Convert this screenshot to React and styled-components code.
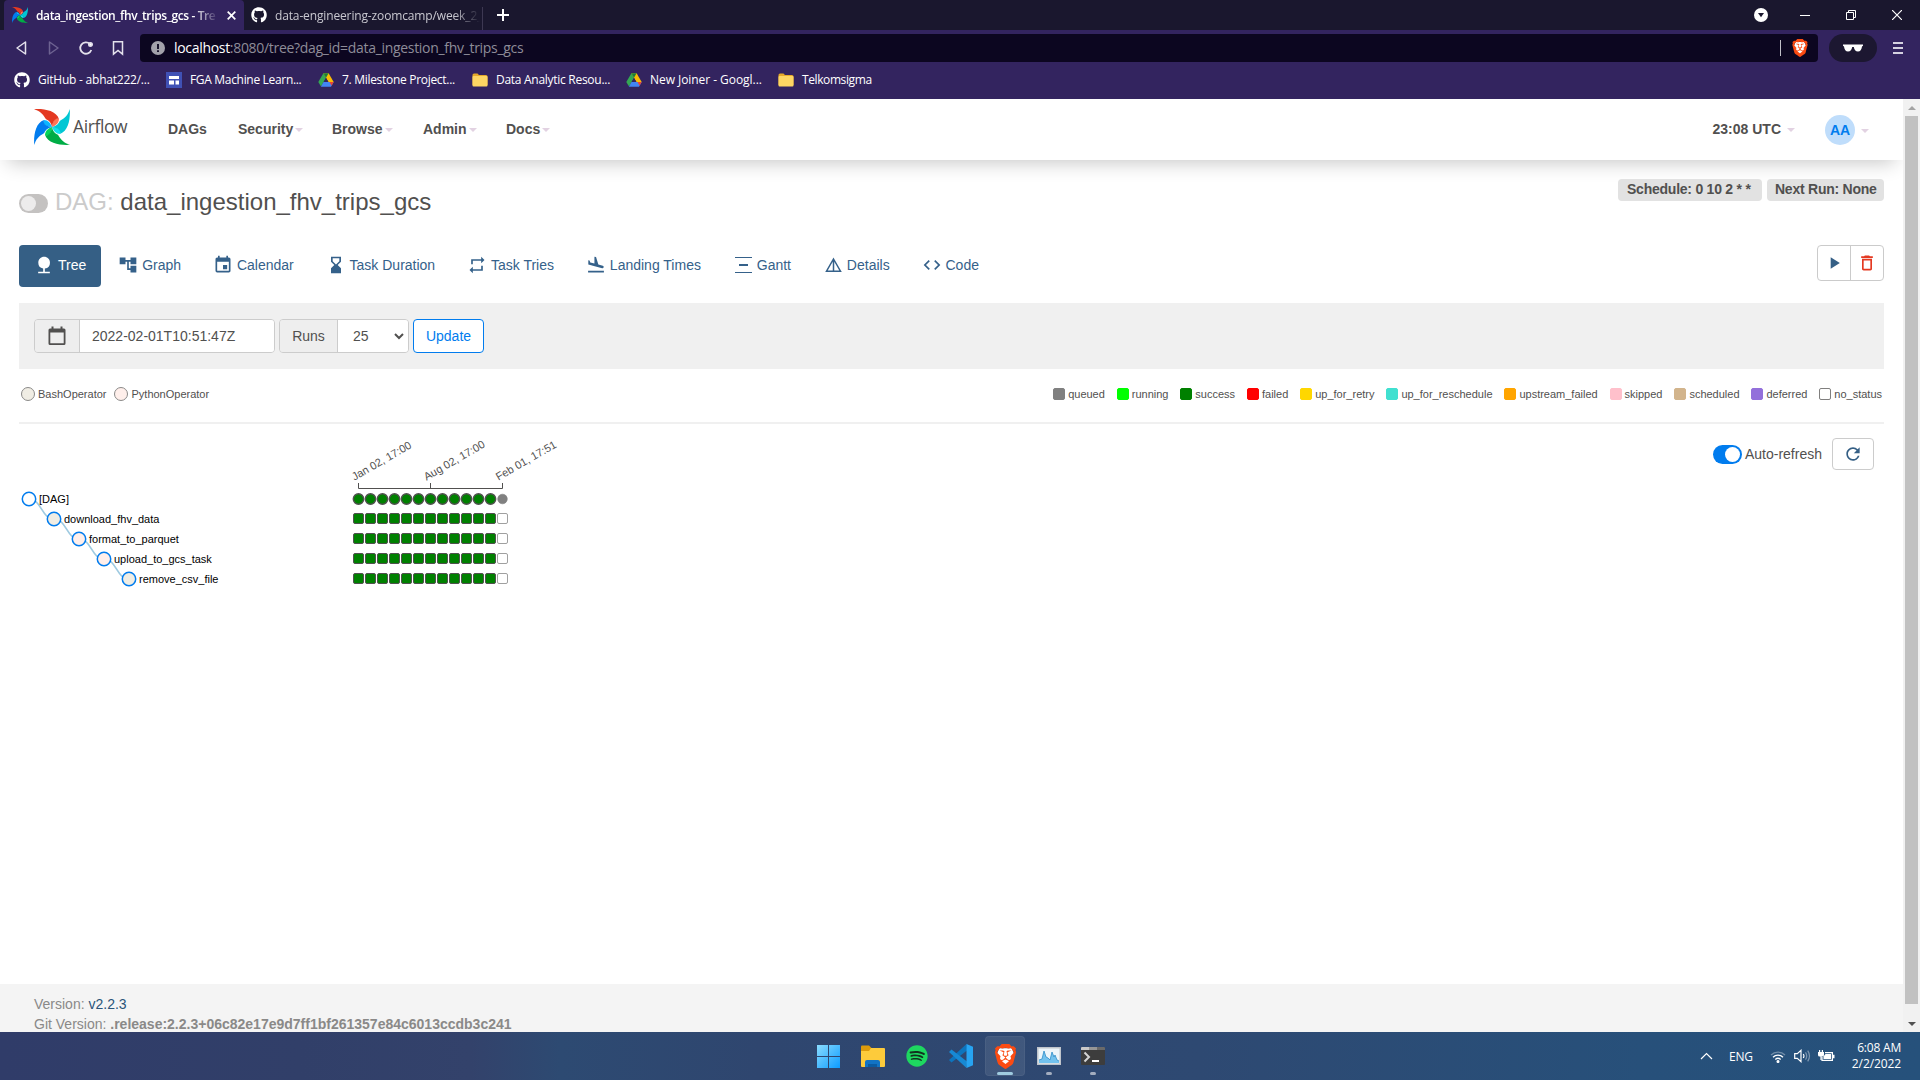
import React from "react";
import styled, { createGlobalStyle } from "styled-components";
import {
  MdNature,
  MdAccountTree,
  MdEvent,
  MdHourglassBottom,
  MdRepeat,
  MdFlightLand,
  MdCode,
  MdPlayArrow,
  MdDeleteOutline,
  MdRefresh,
} from "react-icons/md";
import { FaGithub, FaSpotify } from "react-icons/fa";
import { SiBrave } from "react-icons/si";

const ui = `"Open Sans", "Noto Sans", sans-serif`;
const arial = `"Liberation Sans", Arial, sans-serif`;

const Global = createGlobalStyle`
  *, *::before, *::after { box-sizing: border-box; }
  html, body { margin: 0; padding: 0; }
  body { width: 1920px; height: 1080px; overflow: hidden; background: #fff; }
  svg { display: block; flex: none; }
`;

const Screen = styled.div`
  display: flex;
  flex-direction: column;
  width: 1920px;
  height: 1080px;
`;

const Label = styled.span`
  white-space: pre;
  letter-spacing: ${(p) => p.$ls || 0}px;
`;

/* ---------- browser ---------- */

const TabStrip = styled.div`
  display: flex;
  height: 30px;
  padding-left: 4px;
  background: #1a172e;
  font-family: ${ui};
  color: #fff;
`;

const Tab = styled.div`
  display: flex;
  align-items: center;
  width: ${(p) => p.$w}px;
  padding-left: ${(p) => p.$pl}px;
  gap: 8px;
  border-radius: 4px 4px 0 0;
  font-size: 12px;
  font-weight: ${(p) => (p.$active ? 600 : 400)};
  color: ${(p) => (p.$active ? "#fff" : "#c9c8d0")};
  background: ${(p) => (p.$active ? "#33245f" : "transparent")};
`;

const TabTitle = styled.div`
  width: ${(p) => p.$w}px;
  white-space: nowrap;
  letter-spacing: ${(p) => p.$ls}px;
  mask-image: linear-gradient(to right, #000 ${(p) => p.$w - 26}px, transparent);
`;

const TabRule = styled.div`
  width: 1px;
  height: 23px;
  margin-top: 7px;
  background: #3d3852;
`;

const NewTab = styled.div`
  display: flex;
  align-items: center;
  padding-left: 14px;
`;

const WindowControls = styled.div`
  display: flex;
  align-items: center;
  margin-left: auto;
  padding-bottom: 1px;
  padding-right: 18px;
`;

const ControlSlot = styled.div`
  display: flex;
  justify-content: flex-end;
  width: ${(p) => p.$w}px;
`;

const Toolbar = styled.div`
  display: flex;
  align-items: center;
  height: 36px;
  padding: 0 16px 0 14px;
  background: #33245f;
`;

const NavButtons = styled.div`
  display: flex;
  align-items: center;
  width: 126px;
  gap: 16px;
`;

const UrlBar = styled.div`
  display: flex;
  align-items: center;
  width: 1678px;
  height: 28px;
  padding: 0 9px 0 11px;
  border-radius: 4px;
  background: #0c0620;
  color: #8e8c98;
  font: 14px ${ui};
`;

const UrlText = styled.div`
  margin-left: 9px;
  padding-bottom: 1px;
  letter-spacing: -0.31px;
  b { font-weight: 400; color: #fff; }
`;

const UrlRule = styled.div`
  width: 1px;
  height: 16px;
  margin-left: auto;
  margin-right: 10px;
  background: #c0bfc8;
`;

const PrivatePill = styled.div`
  display: flex;
  align-items: center;
  justify-content: center;
  width: 48px;
  height: 28px;
  margin-left: 11px;
  border-radius: 14px;
  background: #1c1731;
`;

const MenuLines = styled.div`
  display: flex;
  flex-direction: column;
  gap: 3px;
  width: 10px;
  margin-left: 16px;
  i { height: 2px; background: #d5d1e0; }
`;

const Bookmarks = styled.div`
  display: flex;
  align-items: center;
  height: 33px;
  padding: 0 0 6px 13px;
  background: #33245f;
  color: #fff;
  font: 12px ${ui};
`;

const Bookmark = styled.div`
  display: flex;
  align-items: center;
  width: ${(p) => p.$w}px;
  gap: 8px;
`;

const IconBox = styled.span`
  display: flex;
  align-items: center;
  justify-content: center;
  width: ${(p) => p.$w || 16}px;
  flex: none;
`;

/* ---------- page ---------- */

const Viewport = styled.div`
  display: flex;
  height: 933px;
  overflow: hidden;
  background: #fff;
`;

const Page = styled.div`
  display: flex;
  flex-direction: column;
  width: 1903px;
  overflow: hidden;
  font: 14px/20px ${arial};
  color: #51504f;
`;

const Scrollbar = styled.div`
  display: flex;
  flex-direction: column;
  align-items: center;
  width: 17px;
  background: #f1f1f1;
`;

const ScrollArrow = styled.div`
  display: flex;
  align-items: center;
  justify-content: center;
  height: 17px;
  svg { fill: ${(p) => p.$c}; }
`;

const ScrollThumb = styled.div`
  width: 13px;
  height: 888px;
  margin-bottom: 11px;
  background: #c1c1c1;
`;

const Navbar = styled.nav`
  display: flex;
  align-items: center;
  height: 61px;
  flex: none;
  padding: 0 34px;
  background: #fff;
  box-shadow: 0 10px 20px -8px rgba(0, 0, 0, 0.24);
  font-weight: 700;
`;

const Brand = styled.div`
  display: flex;
  align-items: center;
  width: 134px;
  gap: 3px;
  padding-bottom: 5px;
  font: 400 17.5px/20px ${ui};
  span { padding-bottom: 2px; letter-spacing: -0.4px; }
`;

const NavLink = styled.div`
  display: flex;
  align-items: center;
  width: ${(p) => p.$w}px;
  padding-bottom: ${(p) => (p.$flush ? 0 : 2)}px;
  gap: ${(p) => p.$gap || 2}px;
`;

const Caret = styled.i`
  border: 4px solid transparent;
  border-top-color: #e2d2e2;
  border-bottom: 0;
  margin-top: 2px;
`;

const NavRight = styled.div`
  display: flex;
  align-items: center;
  margin-left: auto;
  gap: 30px;
`;

const Avatar = styled.div`
  width: 30px;
  height: 30px;
  border-radius: 50%;
  background: #bfddfb;
  color: #017cee;
  text-align: center;
  line-height: 31px;
`;

const Content = styled.main`
  height: 824px;
  padding: 19px 19px 0;
`;

const TitleRow = styled.div`
  display: flex;
  justify-content: space-between;
  height: 66px;
`;

const Title = styled.h3`
  display: flex;
  align-items: center;
  height: 28px;
  margin: 9px 0 0;
  gap: 7px;
  font-size: 24px;
  font-weight: 400;
  white-space: pre;
  span { color: #cbcbcb; }
`;

const Switch = styled.div`
  display: flex;
  align-items: center;
  justify-content: ${(p) => (p.$on ? "flex-end" : "flex-start")};
  width: 29px;
  height: 19px;
  padding: 2px;
  border-radius: 10px;
  margin-top: ${(p) => p.$mt || 0}px;
  background: ${(p) => (p.$on ? "#017cee" : "#c4c2c1")};
  i {
    width: 15px;
    height: 15px;
    border-radius: 50%;
    background: ${(p) => (p.$on ? "#fff" : "#edecec")};
  }
`;

const Badges = styled.div`
  display: flex;
  gap: 5px;
`;

const Badge = styled.div`
  height: 22px;
  width: ${(p) => p.$w}px;
  padding: 0 0 0 ${(p) => p.$pl}px;
  border-radius: 4px;
  background: #e2e2e2;
  font-weight: 700;
  line-height: 21px;
  letter-spacing: -0.24px;
  white-space: pre;
`;

const PillRow = styled.div`
  display: flex;
  justify-content: space-between;
  height: 58px;
`;

const Pills = styled.div`
  display: flex;
  gap: 1.85px;
  height: 42px;
`;

const Pill = styled.div`
  display: flex;
  align-items: center;
  gap: 4px;
  padding: 0 15px 2px;
  border-radius: 4px;
  color: ${(p) => (p.$active ? "#fff" : "#35618a")};
  background: ${(p) => (p.$active ? "#355f85" : "transparent")};
`;

const ButtonGroup = styled.div`
  display: flex;
  width: 67px;
  height: 36px;
  border: 1px solid #cbcbcb;
  border-radius: 4px;
`;

const GroupButton = styled.div`
  display: flex;
  align-items: center;
  justify-content: center;
  width: ${(p) => p.$w}px;
  color: ${(p) => p.$c};
  & + & { border-left: 1px solid #cbcbcb; }
`;

const FilterBar = styled.div`
  display: flex;
  gap: 4px;
  height: 66px;
  padding: 16px 15px;
  background: #f0f0f0;
`;

const InputGroup = styled.div`
  display: flex;
  width: ${(p) => p.$w}px;
  height: 34px;
  border: 1px solid #ccc;
  border-radius: 4px;
  overflow: hidden;
`;

const Addon = styled.div`
  display: flex;
  align-items: center;
  justify-content: center;
  width: ${(p) => p.$w}px;
  border-right: 1px solid #ccc;
  background: #eee;
`;

const Field = styled.div`
  display: flex;
  align-items: center;
  justify-content: space-between;
  flex: 1;
  padding: 0 4px 0 ${(p) => p.$pl}px;
  background: #fff;
`;

const UpdateButton = styled.div`
  width: 71px;
  height: 34px;
  border: 1px solid #017cee;
  border-radius: 4px;
  background: #fff;
  color: #017cee;
  text-align: center;
  line-height: 32px;
`;

const Legend = styled.div`
  display: flex;
  justify-content: space-between;
  align-items: center;
  height: 55px;
  padding: 0 2px 3px;
  border-bottom: 2px solid #f0f0f0;
  font-size: 11px;
`;

const LegendGroup = styled.div`
  display: flex;
  gap: ${(p) => p.$gap}px;
`;

const LegendItem = styled.div`
  display: flex;
  align-items: center;
  gap: 3px;
  height: 16px;
  letter-spacing: ${(p) => p.$ls || 0}px;
`;

const OperatorDot = styled.i`
  width: 14px;
  height: 14px;
  border: 1px solid #8a8988;
  border-radius: 50%;
  background: ${(p) => p.$c};
`;

const StateSwatch = styled.i`
  width: 12px;
  height: 12px;
  border: 1px solid ${(p) => (p.$c === "white" ? "#807f7e" : p.$c)};
  border-radius: 2px;
  background: ${(p) => p.$c};
`;

const TreeArea = styled.div`
  display: flex;
  justify-content: space-between;
  padding: 14px 10px 0 0;
`;

const Refresh = styled.div`
  display: flex;
  align-items: center;
  gap: 3px;
  height: 32px;
`;

const RefreshButton = styled.div`
  display: flex;
  align-items: center;
  justify-content: center;
  width: 42px;
  height: 32px;
  margin-left: 7px;
  border: 1px solid #ccc;
  border-radius: 4px;
  color: #355f85;
`;

const TreeChart = styled.svg`
  margin-left: -19px;
  font-family: ${arial};
  font-size: 11px;
`;

const Footer = styled.footer`
  height: 48px;
  padding: 10px 34px 0;
  background: #f4f4f4;
  color: #8a8988;
  a { color: #2a5479; }
`;

/* ---------- taskbar ---------- */

const Taskbar = styled.div`
  display: flex;
  align-items: center;
  height: 48px;
  background: linear-gradient(90deg, #303c69 0, #313f69 300px, #33426b 470px, #2d4a72 560px, #2f466f 760px, #2e4972 1200px, #27507a 1640px, #26517b 1920px);
  color: #fff;
  font: 12px ${ui};
`;

const TaskIcons = styled.div`
  display: flex;
  gap: 4px;
  width: 908px;
  margin-left: 809px;
`;

const TaskIcon = styled.div`
  display: flex;
  flex-direction: column;
  align-items: center;
  justify-content: flex-end;
  width: 40px;
  height: 40px;
  border-radius: 4px;
  background: ${(p) => (p.$active ? "rgba(255,255,255,0.09)" : "transparent")};
  box-shadow: ${(p) => (p.$active ? "inset 0 0 0 1px rgba(255,255,255,0.05)" : "none")};
`;

const Glyph = styled.div`
  display: flex;
  align-items: center;
  justify-content: center;
  height: 24px;
  margin-bottom: 4px;
`;

const Running = styled.i`
  width: ${(p) => p.$w || 0}px;
  height: 3px;
  margin-bottom: 1px;
  border-radius: 2px;
  background: ${(p) => (p.$w > 6 ? "#9fcbe0" : "#a3adbf")};
`;

const Tray = styled.div`
  display: flex;
  align-items: center;
  margin-left: -17px;
`;

const TraySlot = styled.div`
  width: ${(p) => p.$w}px;
  padding-bottom: ${(p) => p.$pb || 0}px;
`;

const Clock = styled.div`
  width: 65px;
  text-align: right;
  line-height: 16px;
`;

/* ---------- drawings ---------- */

const blades = [
  ["#e43921", "#ff7557"],
  ["#00c7d4", "#11e1ee"],
  ["#00ad46", "#04d659"],
  ["#017cee", "#0cb6ff"],
];

const Pinwheel = ({ size }) => (
  <svg width={size} height={size} viewBox="0 0 36 36">
    {blades.map(([dark, light], i) => (
      <g key={dark} transform={`rotate(${i * 90} 18 18)`}>
        <path fill={light} d="M25 10 C24.800 14 22 16.500 18 18 C18.500 11 21.500 8 25 10 Z" />
        <path fill={dark} d="M0 .2 C10 -.4 22 1.500 25 10 C22 9 19 11 18 18 C17 12.500 13.500 11 12 10.300 C9 5 6 2 0 .2 Z" />
      </g>
    ))}
  </svg>
);

const DriveIcon = () => (
  <svg width="16" height="14" viewBox="0 0 16 14">
    <path fill="#34a853" d="M5.400 0.300 L8 4.700 L3 13.500 L.3 9 Z" />
    <path fill="#fbbc04" d="M5.400 .3 H10.600 L15.700 9 H10.500 Z" />
    <path fill="#4285f4" d="M5.500 9 H15.700 L13 13.700 H2.900 Z" />
    <path fill="#ea4335" d="M11.500 9 H15.700 L13.500 12.800 Z" />
    <path fill="#188038" d="M5.400 .3 H10.600 L8 4.700 Z" />
    <path fill="#33245f" d="M8 5 L10.300 9 H5.700 Z" />
  </svg>
);

const FolderIcon = () => (
  <svg width="16" height="14" viewBox="0 0 16 14">
    <path fill="#e5a92a" d="M.5 2 Q.5 .5 2 .5 H5.500 L7 2 H14 Q15.500 2 15.500 3.500 V12 H.5 Z" />
    <rect x=".5" y="3" width="15" height="10.500" rx="1" fill="#fdd663" />
  </svg>
);

const SitesIcon = () => (
  <svg width="16" height="16" viewBox="0 0 16 16">
    <rect width="16" height="16" fill="#4051b5" />
    <rect x="3" y="4" width="10" height="3" fill="#fff" />
    <rect x="3" y="8.500" width="5" height="4" fill="#fff" />
    <rect x="9.500" y="8.500" width="3.500" height="4" fill="#fff" />
  </svg>
);

const BraveLogo = ({ size }) => (
  <svg width={size} height={size} viewBox="0 0 24 24">
    <path fill="#fff" d="M6 4 H18 L20 9 L17 18 L12 22 L7 18 L4 9 Z" />
    <SiBrave size={24} color="#fb4b12" />
  </svg>
);

const GanttIcon = () => (
  <svg width="20" height="18" viewBox="0 0 20 18" fill="currentColor">
    <path d="M2 1h17v1H2zM6 8h9v2H6zM2 16h17v1H2z" />
  </svg>
);

const DetailsIcon = () => (
  <svg width="20" height="18" viewBox="0 0 20 18" fill="none" stroke="currentColor" strokeWidth="1.500">
    <path d="M10.500 3 L17.500 15.200 H3.500 Z M10.500 3 V15" />
  </svg>
);

const CalendarOutline = () => (
  <svg width="18" height="20" viewBox="0 0 18 20">
    <path fill="#51504f" fillRule="evenodd" d="M3.500 .5h2v2h7v-2h2v2H16q1.500 0 1.500 1.500v13.500Q17.500 19 16 19H2Q.5 19 .5 17.500V4Q.5 2.500 2 2.500h1.500zM2.300 6.500v10.700h13.400V6.500z" />
  </svg>
);

/* ---------- data ---------- */

const pills = [
  ["Tree", <MdNature size={20} />],
  ["Graph", <MdAccountTree size={20} />],
  ["Calendar", <MdEvent size={20} />],
  ["Task Duration", <MdHourglassBottom size={20} />],
  ["Task Tries", <MdRepeat size={20} />],
  ["Landing Times", <MdFlightLand size={20} />],
  ["Gantt", <GanttIcon />],
  ["Details", <DetailsIcon />],
  ["Code", <MdCode size={20} />],
];

const states = [
  ["queued", "gray"],
  ["running", "lime"],
  ["success", "green"],
  ["failed", "red"],
  ["up_for_retry", "gold"],
  ["up_for_reschedule", "turquoise"],
  ["upstream_failed", "orange"],
  ["skipped", "pink"],
  ["scheduled", "tan"],
  ["deferred", "mediumpurple"],
  ["no_status", "white"],
];

const tasks = [
  ["[DAG]", "#fff"],
  ["download_fhv_data", "#f0ede4"],
  ["format_to_parquet", "#ffefeb"],
  ["upload_to_gcs_task", "#ffefeb"],
  ["remove_csv_file", "#f0ede4"],
];

const ticks = [
  [358.5, "Jan 02, 17:00"],
  [430.5, "Aug 02, 17:00"],
  [502.5, "Feb 01, 17:51"],
];

const runs = Array.from({ length: 13 }, (_, i) => i);

const Chart = () => (
  <TreeChart width="620" height="160" viewBox="0 438 620 160">
    {tasks.slice(1).map(([name], i) => {
      const x = 29 + i * 25;
      const y = 499 + i * 20;
      return (
        <path
          key={name}
          d={`M${x} ${y} C${x + 12.5} ${y} ${x + 12.5} ${y + 20} ${x + 25} ${y + 20}`}
          fill="none"
          stroke="#9ecae1"
          strokeWidth="1.500"
        />
      );
    })}
    {tasks.map(([name, fill], i) => (
      <g key={name}>
        <circle cx={29 + i * 25} cy={499 + i * 20} r="6.700" fill={fill} stroke="#017cee" strokeWidth="1.500" />
        <text x={39 + i * 25} y={503 + i * 20} fill="#000">{name}</text>
      </g>
    ))}
    <path d="M358.500 483 V488.500 H502.500 V483 M430.500 483 V488" fill="none" stroke="#51504f" />
    {ticks.map(([x, text]) => (
      <text key={text} transform={`translate(${x - 4} 480.800) rotate(-30)`} fill="#51504f">{text}</text>
    ))}
    {runs.map((i) => {
      const done = i < 12;
      const x = 358.5 + i * 12;
      return (
        <g key={i} stroke={done ? "#51504f" : "#a0a0a0"}>
          <circle cx={x} cy="499" r={done ? 5.2 : 4.8} fill={done ? "green" : "gray"} stroke={done ? "#51504f" : "gray"} strokeWidth={done ? 1.4 : 0.6} />
          {[0, 1, 2, 3].map((r) => (
            <rect key={r} x={x - 5} y={513.5 + r * 20} width="10" height="10" rx="1.500" fill={done ? "green" : "#fff"} />
          ))}
        </g>
      );
    })}
  </TreeChart>
);

export default function App() {
  return (
    <Screen>
      <Global />
      <TabStrip>
        <Tab $active $w={240} $pl={8}>
          <Pinwheel size={16} />
          <TabTitle $w={183} $ls={-0.38}>data_ingestion_fhv_trips_gcs - Tre</TabTitle>
          <svg width="9" height="9" viewBox="0 0 9 9" stroke="#fff" strokeWidth="1.700">
            <path d="M.7 .7 L8.300 8.300 M8.300 .7 L.7 8.300" />
          </svg>
        </Tab>
        <Tab $w={238} $pl={7}>
          <FaGithub size={16} color="#fff" />
          <TabTitle $w={205} $ls={-0.14}>data-engineering-zoomcamp/week_2_</TabTitle>
        </Tab>
        <TabRule />
        <NewTab>
          <svg width="12" height="12" viewBox="0 0 12 12" fill="#fff"><path d="M5 0h2v5h5v2H7v5H5V7H0V5h5z" /></svg>
        </NewTab>
        <WindowControls>
          <ControlSlot $w={20}>
            <svg width="14" height="14" viewBox="0 0 14 14"><circle cx="7" cy="7" r="7" fill="#fff" /><path d="M4 5h6L7 9.300z" fill="#1a172e" /></svg>
          </ControlSlot>
          <ControlSlot $w={42}>
            <svg width="10" height="10" viewBox="0 0 10 10"><path d="M0 5.500h10" stroke="#fff" /></svg>
          </ControlSlot>
          <ControlSlot $w={46}>
            <svg width="10" height="10" viewBox="0 0 10 10" fill="none" stroke="#fff"><path d="M.5 2.500h7v7h-7zM2.500 2V.5h7v7H8" /></svg>
          </ControlSlot>
          <ControlSlot $w={46}>
            <svg width="10" height="10" viewBox="0 0 10 10" stroke="#fff" strokeWidth="1.200"><path d="M0 0L10 10M10 0L0 10" /></svg>
          </ControlSlot>
        </WindowControls>
      </TabStrip>

      <Toolbar>
        <NavButtons>
          <svg width="16" height="16" viewBox="0 0 16 16" fill="none" stroke="#e4e1ec" strokeWidth="1.500" strokeLinejoin="round"><path d="M11.500 2v12L3 8z" /></svg>
          <svg width="16" height="16" viewBox="0 0 16 16" fill="none" stroke="#6d6291" strokeWidth="1.500" strokeLinejoin="round"><path d="M3.500 2v12L12 8z" /></svg>
          <svg width="16" height="16" viewBox="0 0 16 16" fill="none" stroke="#e4e1ec" strokeWidth="1.800"><path d="M13.300 10A5.700 5.700 0 1 1 12 4" /><circle cx="12.500" cy="4.500" r="1.600" fill="#fff" /></svg>
          <svg width="16" height="16" viewBox="0 0 16 16" fill="none" stroke="#e4e1ec" strokeWidth="1.500"><path d="M3.500 1.700h9v12.500L8 10.500l-4.500 3.700z" /></svg>
        </NavButtons>
        <UrlBar>
          <svg width="14" height="14" viewBox="0 0 14 14"><circle cx="7" cy="7" r="7" fill="#a3a2ab" /><path d="M6.100 3h1.800v5H6.100zM6.100 9.300h1.800V11H6.100z" fill="#0c0620" /></svg>
          <UrlText><b>localhost</b>:8080/tree?dag_id=data_ingestion_fhv_trips_gcs</UrlText>
          <UrlRule />
          <BraveLogo size={18} />
        </UrlBar>
        <PrivatePill>
          <svg width="20" height="8" viewBox="0 0 20 8" fill="#fff"><path d="M0 .5h20v1.200l-1 .8c-.3 3-1.800 5-4 5-2.500 0-3.800-2-4.200-4.500h-1.600C8.800 5.500 7.500 7.500 5 7.500c-2.200 0-3.700-2-4-5l-1-.8z" /></svg>
        </PrivatePill>
        <MenuLines><i /><i /><i /></MenuLines>
      </Toolbar>

      <Bookmarks>
        <Bookmark $w={153}><IconBox $w={17}><FaGithub size={16} /></IconBox><Label $ls={-0.23}>GitHub - abhat222/...</Label></Bookmark>
        <Bookmark $w={152}><IconBox><SitesIcon /></IconBox><Label $ls={-0.32}>FGA Machine Learn...</Label></Bookmark>
        <Bookmark $w={154}><IconBox><DriveIcon /></IconBox><Label $ls={-0.3}>7. Milestone Project...</Label></Bookmark>
        <Bookmark $w={154}><IconBox><FolderIcon /></IconBox><Label $ls={-0.28}>Data Analytic Resou...</Label></Bookmark>
        <Bookmark $w={152}><IconBox><DriveIcon /></IconBox><Label $ls={-0.05}>New Joiner - Googl...</Label></Bookmark>
        <Bookmark $w={152}><IconBox><FolderIcon /></IconBox><Label $ls={-0.4}>Telkomsigma</Label></Bookmark>
      </Bookmarks>

      <Viewport>
        <Page>
          <Navbar>
            <Brand><Pinwheel size={36} /><span>Airflow</span></Brand>
            <NavLink $w={70}>DAGs</NavLink>
            <NavLink $w={94}>Security<Caret /></NavLink>
            <NavLink $w={91}>Browse<Caret /></NavLink>
            <NavLink $w={83}>Admin<Caret /></NavLink>
            <NavLink $w={80}>Docs<Caret /></NavLink>
            <NavRight>
              <NavLink $gap={6}>23:08 UTC<Caret /></NavLink>
              <NavLink $gap={6} $flush><Avatar>AA</Avatar><Caret /></NavLink>
            </NavRight>
          </Navbar>

          <Content>
            <TitleRow>
              <Title><Switch $mt={2}><i /></Switch><div><span>DAG:</span> data_ingestion_fhv_trips_gcs</div></Title>
              <Badges>
                <Badge $w={144} $pl={9}>Schedule: 0 10 2 * *</Badge>
                <Badge $w={117} $pl={8}>Next Run: None</Badge>
              </Badges>
            </TitleRow>

            <PillRow>
              <Pills>
                {pills.map(([name, icon], i) => (
                  <Pill key={name} $active={i === 0}><IconBox $w={20}>{icon}</IconBox>{name}</Pill>
                ))}
              </Pills>
              <ButtonGroup>
                <GroupButton $w={32} $c="#355f85"><MdPlayArrow size={20} /></GroupButton>
                <GroupButton $w={33} $c="#e43921"><MdDeleteOutline size={20} /></GroupButton>
              </ButtonGroup>
            </PillRow>

            <FilterBar>
              <InputGroup $w={241}>
                <Addon $w={45}><CalendarOutline /></Addon>
                <Field $pl={12}>2022-02-01T10:51:47Z</Field>
              </InputGroup>
              <InputGroup $w={130}>
                <Addon $w={58}>Runs</Addon>
                <Field $pl={15}>
                  25
                  <svg width="10" height="7" viewBox="0 0 10 7" fill="none" stroke="#51504f" strokeWidth="2"><path d="M1 1l4 4 4-4" /></svg>
                </Field>
              </InputGroup>
              <UpdateButton>Update</UpdateButton>
            </FilterBar>

            <Legend>
              <LegendGroup $gap={8}>
                <LegendItem><OperatorDot $c="#f0ede4" />BashOperator</LegendItem>
                <LegendItem><OperatorDot $c="#ffefeb" />PythonOperator</LegendItem>
              </LegendGroup>
              <LegendGroup $gap={11.9}>
                {states.map(([name, color]) => (
                  <LegendItem key={name}><StateSwatch $c={color} />{name}</LegendItem>
                ))}
              </LegendGroup>
            </Legend>

            <TreeArea>
              <Chart />
              <Refresh>
                <Switch $on $mt={1}><i /></Switch>
                <span>Auto-refresh</span>
                <RefreshButton><MdRefresh size={20} /></RefreshButton>
              </Refresh>
            </TreeArea>
          </Content>

          <Footer>
            <div>Version: <a>v2.2.3</a></div>
            <div>Git Version: <b>.release:2.2.3+06c82e17e9d7ff1bf261357e84c6013ccdb3c241</b></div>
          </Footer>
        </Page>
        <Scrollbar>
          <ScrollArrow $c="#a3a3a3"><svg width="8" height="4" viewBox="0 0 8 4"><path d="M0 4L4 0l4 4z" /></svg></ScrollArrow>
          <ScrollThumb />
          <ScrollArrow $c="#505050"><svg width="8" height="4" viewBox="0 0 8 4"><path d="M0 0l4 4 4-4z" /></svg></ScrollArrow>
        </Scrollbar>
      </Viewport>

      <Taskbar>
        <TaskIcons>
          <TaskIcon>
            <Glyph>
              <svg width="24" height="23" viewBox="0 0 24 23">
                <defs><linearGradient id="win" x1="0" y1="0" x2="23" y2="23" gradientUnits="userSpaceOnUse"><stop stopColor="#8adcff" /><stop offset="1" stopColor="#0c9bff" /></linearGradient></defs>
                <path fill="url(#win)" d="M0 0h11v11H0zM12 0h11v11H12zM0 12h11v11H0zM12 12h11v11H12z" />
              </svg>
            </Glyph>
            <Running />
          </TaskIcon>
          <TaskIcon>
            <Glyph>
              <svg width="24" height="22" viewBox="0 0 24 22">
                <path fill="#dd9b0c" d="M0 1.500Q0 .5 1 .5h7l2.500 2.500V8H0z" />
                <path fill="#fdcb3b" d="M0 6h8l2-3h13q1 0 1 1v17q0 1-1 1H1q-1 0-1-1z" />
                <path fill="#1273c4" d="M4 22v-5q0-2 2-2h11q2 0 2 2v5z" />
                <path fill="#0b5ba1" d="M7 19h9v3H7z" />
              </svg>
            </Glyph>
            <Running />
          </TaskIcon>
          <TaskIcon>
            <Glyph>
              <svg width="24" height="24" viewBox="0 0 24 24"><circle cx="12" cy="12" r="10" fill="#12311f" /><FaSpotify x="1" y="1" size={22} color="#1ed760" /></svg>
            </Glyph>
            <Running />
          </TaskIcon>
          <TaskIcon>
            <Glyph>
              <svg width="24" height="24" viewBox="0 0 24 24">
                <path fill="#0d74bd" d="M17.500 0L0 16l2.500 2.500L18 6.500z" />
                <path fill="#1789d4" d="M17.500 24L0 8l2.500-2.500L18 17.500z" />
                <path fill="#27a4f2" d="M17.500 0L24 2.800v18.400L17.500 24z" />
              </svg>
            </Glyph>
            <Running />
          </TaskIcon>
          <TaskIcon $active>
            <Glyph><BraveLogo size={25} /></Glyph>
            <Running $w={16} />
          </TaskIcon>
          <TaskIcon>
            <Glyph>
              <svg width="24" height="18" viewBox="0 0 24 18">
                <rect width="24" height="18" fill="#bfc4cb" />
                <rect x="1.500" y="1.500" width="21" height="15" fill="#edf5fa" />
                <path fill="#73c2ee" d="M2 16V13l3-1 2-8 2 6 2 1 2 2 2-8 2 5 1-2 2 5 2 1v2z" />
                <path fill="none" stroke="#2f8dc9" strokeWidth=".8" d="M2 13l3-1 2-8 2 6 2 1 2 2 2-8 2 5 1-2 2 5 2 1" />
              </svg>
            </Glyph>
            <Running $w={6} />
          </TaskIcon>
          <TaskIcon>
            <Glyph>
              <svg width="24" height="18" viewBox="0 0 24 18">
                <rect width="24" height="18" rx="1" fill="#3d3d3d" />
                <path fill="#c9c9c9" d="M0 3V1q0-1 1-1h7v3z" />
                <path fill="#969696" d="M8 0h8v3H8z" />
                <path fill="#6a6a6a" d="M16 0h7q1 0 1 1v2h-8z" />
                <path fill="none" stroke="#d5d5d5" strokeWidth="2" d="M3.500 5.500L8 10l-4.500 4.500" />
                <path fill="#fff" d="M11 13h7v2h-7z" />
              </svg>
            </Glyph>
            <Running $w={6} />
          </TaskIcon>
        </TaskIcons>
        <Tray>
          <TraySlot $w={29} $pb={1}>
            <svg width="13" height="8" viewBox="0 0 13 8" fill="none" stroke="#fff" strokeWidth="1.200"><path d="M1 7l5.500-5.500L12 7" /></svg>
          </TraySlot>
          <TraySlot $w={41}><Label $ls={-0.2}>ENG</Label></TraySlot>
          <TraySlot $w={24}>
            <svg width="16" height="13" viewBox="0 0 16 13" fill="none" stroke="#fff" strokeWidth="1.300">
              <path d="M1 5a10 10 0 0 1 14 0" opacity=".35" />
              <path d="M3 7.300a7 7 0 0 1 10 0M5.300 9.500a4 4 0 0 1 5.400 0" />
              <circle cx="8" cy="11.500" r=".9" fill="#fff" />
            </svg>
          </TraySlot>
          <TraySlot $w={24}>
            <svg width="17" height="14" viewBox="0 0 17 14" fill="none" stroke="#fff" strokeWidth="1.200">
              <path d="M.7 4.700h2.600L7 1.300v11.400L3.300 9.300H.7zM9.300 5q1.300 2 0 4" />
              <path d="M11.500 3.300q2.500 3.700 0 7.400M13.700 1.700q3.600 5.300 0 10.600" opacity=".4" />
            </svg>
          </TraySlot>
          <TraySlot $w={18} $pb={1}>
            <svg width="17" height="14" viewBox="0 0 17 14">
              <path fill="none" stroke="#fff" strokeWidth="1.200" d="M7 3.600h7.400v7.800H4V8" />
              <path fill="#fff" d="M7.500 5h5.500v5H5.500V7.500zM15 5.800h1.500v3.400H15zM0 3h6v3Q6 7.500 4.300 7.500H1.700Q0 7.500 0 6zM1 1h1.200v2H1zM3.800 1H5v2H3.800zM2.400 7h1.200v4H2.400z" />
            </svg>
          </TraySlot>
          <Clock><div><Label $ls={-0.2}>6:08 AM</Label></div><div><Label $ls={-0.1}>2/2/2022</Label></div></Clock>
        </Tray>
      </Taskbar>
    </Screen>
  );
}
